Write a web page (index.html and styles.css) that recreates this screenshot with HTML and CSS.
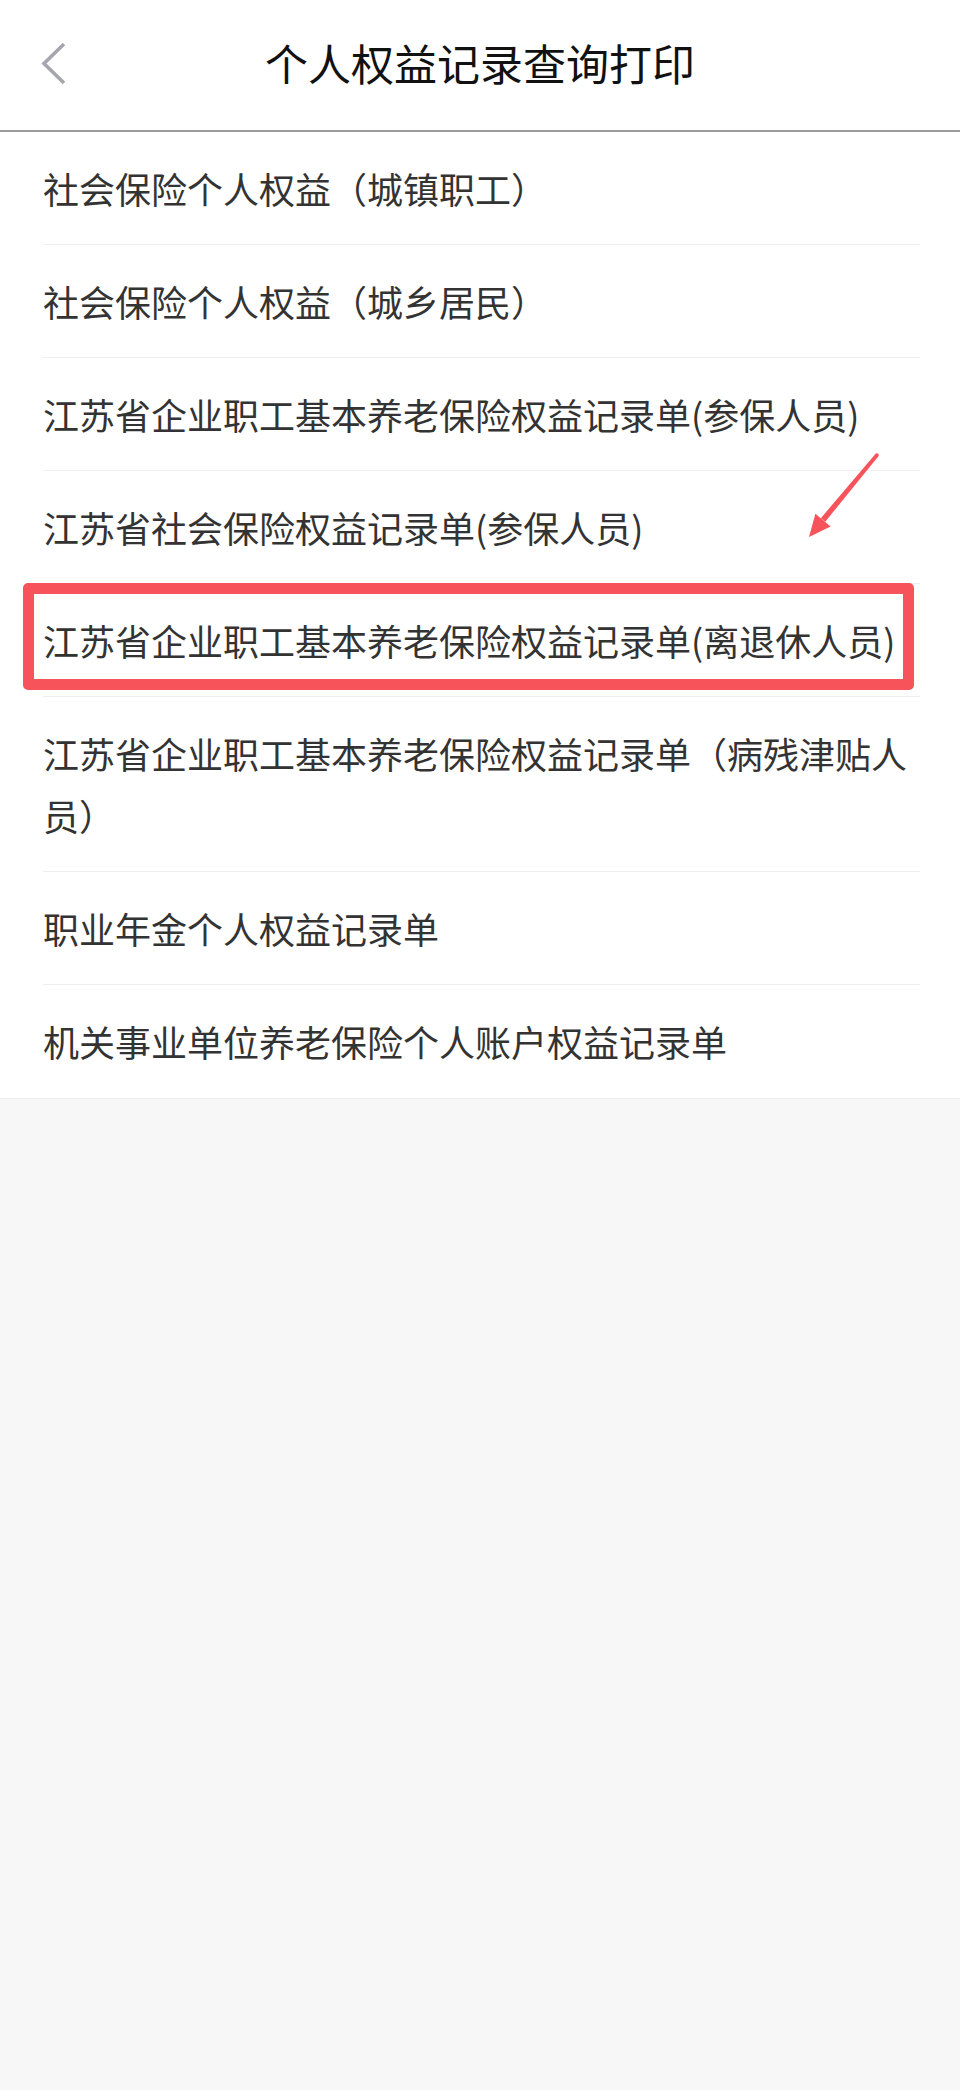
FILE: index.html
```html
<!DOCTYPE html>
<html lang="zh-CN">
<head>
<meta charset="utf-8">
<title>个人权益记录查询打印</title>
<link rel="stylesheet" href="styles.css">
</head>
<body>
<div class="page">
  <header class="topbar">
    <div class="back">
      <svg class="back-icon" width="28" height="44" viewBox="0 0 28 44">
        <polyline points="23,2 3,21.5 23,41" fill="none" stroke="#a6a6ae" stroke-width="3.6" stroke-linecap="butt" stroke-linejoin="miter"/>
      </svg>
    </div>
    <h1 class="title">个人权益记录查询打印</h1>
    <div class="spacer"></div>
  </header>
  <ul class="list">
    <li class="item">社会保险个人权益（城镇职工）</li>
    <li class="item">社会保险个人权益（城乡居民）</li>
    <li class="item">江苏省企业职工基本养老保险权益记录单(参保人员)</li>
    <li class="item">江苏省社会保险权益记录单(参保人员)</li>
    <li class="item">江苏省企业职工基本养老保险权益记录单(离退休人员)</li>
    <li class="item">江苏省企业职工基本养老保险权益记录单（病残津贴人员）</li>
    <li class="item">职业年金个人权益记录单</li>
    <li class="item">机关事业单位养老保险个人账户权益记录单</li>
  </ul>
  <div class="highlight"></div>
  <svg class="arrow" width="100" height="110" viewBox="0 0 100 110">
    <polygon points="88.4,16.2 85.6,13.8 30.8,78.2 35.2,81.8" fill="#f7535a"/>
    <polygon points="19,97 25.4,73.8 40.6,86.6" fill="#f7535a"/>
    <circle cx="87" cy="15" r="1.8" fill="#f7535a"/>
  </svg>
</div>
</body>
</html>
```
FILE: styles.css
```css
html, body {
  margin: 0;
  padding: 0;
}
body {
  background: #f7f7f7;
  font-family: "Noto Sans CJK SC", "Noto Sans", sans-serif;
}
.page {
  position: relative;
  width: 960px;
  min-height: 2090px;
  background: #f7f7f7;
}
.topbar {
  display: grid;
  grid-template-columns: 1fr auto 1fr;
  align-items: center;
  height: 130px;
  background: #ffffff;
  border-bottom: 2px solid #9b9b9b;
}
.back {
  padding-left: 41px;
  display: flex;
  align-items: center;
  height: 130px;
}
.back-icon {
  display: block;
  margin-top: -2px;
}
.title {
  margin: 0;
  font-size: 43px;
  font-weight: 400;
  color: #111111;
  line-height: 60px;
  letter-spacing: 0;
  margin-top: -6px;
}
.list {
  list-style: none;
  margin: 0;
  padding: 0 40px 0 43px;
  background: #ffffff;
  border-bottom: 1px solid #efefef;
}
.item {
  padding: 25px 0;
  font-size: 36px;
  line-height: 62px;
  color: #333333;
  border-bottom: 1px solid #eeeeee;
}
.item:last-child {
  padding-bottom: 26px;
  border-bottom: none;
}
.highlight {
  position: absolute;
  left: 23px;
  top: 583px;
  width: 869px;
  height: 85px;
  border: 11px solid #f7535a;
  border-radius: 5px;
}
.arrow {
  position: absolute;
  left: 790px;
  top: 440px;
}
```
